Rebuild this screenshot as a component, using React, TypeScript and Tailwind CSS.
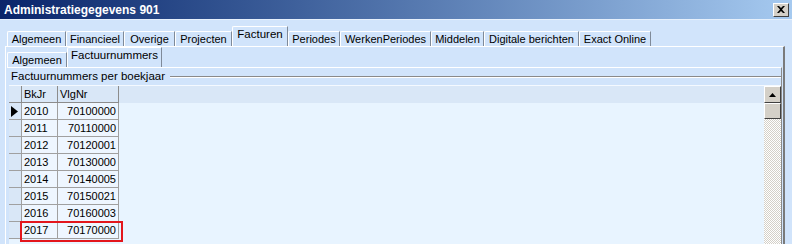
import React from 'react';

const MAIN_TABS = [
  { label: 'Algemeen', w: 'w-[59px]' },
  { label: 'Financieel', w: 'w-[58px]' },
  { label: 'Overige', w: 'w-[51px]' },
  { label: 'Projecten', w: 'w-[57px]' },
  { label: 'Facturen', w: 'w-[56px]', active: true },
  { label: 'Periodes', w: 'w-[52px]' },
  { label: 'WerkenPeriodes', w: 'w-[91px]' },
  { label: 'Middelen', w: 'w-[53px]' },
  { label: 'Digitale berichten', w: 'w-[95px]' },
  { label: 'Exact Online', w: 'w-[72px]' },
];

const ROWS = [
  ['2010', '70100000'],
  ['2011', '70110000'],
  ['2012', '70120001'],
  ['2013', '70130000'],
  ['2014', '70140005'],
  ['2015', '70150021'],
  ['2016', '70160003'],
  ['2017', '70170000'],
];

function Tab({ label, w, active }: { label: string; w: string; active?: boolean }) {
  return (
    <div
      className={`${w} flex items-center justify-center border-t border-l border-white border-r border-r-[#7f8a99] rounded-tl-[2px] ${
        active ? 'h-[20px] pb-[3px] text-[11.5px]' : 'h-[15px] pt-[1px]'
      }`}
    >
      {label}
    </div>
  );
}

export default function App() {
  return (
    <div className="w-[792px] h-[244px] overflow-hidden bg-[#d1e4fb] font-['Liberation_Sans',Arial,sans-serif] text-[11px] leading-none text-[#000]">
      {/* Title bar */}
      <div className="h-[20px] flex items-center justify-between pl-[4px] pr-[3px] bg-gradient-to-r from-[#0a246a] to-[#a6caf0] border-b border-[#e6f0fc]">
        <span className="text-white font-bold text-[12px]">Administratiegegevens 901</span>
        <div className="w-[16px] h-[14px] bg-[#d4d0c8] border border-t-white border-l-white border-r-[#404040] border-b-[#404040] flex items-center justify-center">
          <svg width="8" height="7" viewBox="0 0 8 7">
            <path d="M0 0h2l2 2 2-2h2L5 3.5 8 7H6L4 5 2 7H0l3-3.5z" fill="#000" />
          </svg>
        </div>
      </div>

      {/* Main tabs */}
      <div className="h-[26px] flex items-end pl-[7px]">
        {MAIN_TABS.map(t => (
          <Tab key={t.label} {...t} />
        ))}
      </div>

      {/* Outer panel */}
      <div className="ml-[5px] w-[780px] h-[200px] border-t border-l border-white border-r-2 border-r-[#7a7a7a] pl-[1px]">
        {/* Sub tabs */}
        <div className="h-[20px] flex items-end">
          <Tab label="Algemeen" w="w-[60px]" />
          <Tab label="Factuurnummers" w="w-[95px]" active />
        </div>

        <div className="border-t border-white border-r border-r-[#8a8a8a] h-[180px] mr-[1px]">
          {/* Group header */}
          <div className="h-[17px] flex items-center pl-[4px] text-[11.5px]">
            <span className="pr-[5px]">Factuurnummers per boekjaar</span>
            <div className="flex-1 h-[2px] border-t border-[#8a8a8a] border-b border-b-white" />
          </div>

          {/* Grid */}
          <div className="ml-[2px] h-[170px] flex bg-[#e8f4ff] border-t border-[#f4f9ff] relative">
            <div className="flex-1">
              <div className="flex h-[17px] bg-[#d9e7f7]">
                <div className="w-[13px] border-r border-b border-[#8c8c8c]" />
                <div className="w-[36px] pl-[2px] flex items-center border-r border-b border-[#8c8c8c]">BkJr</div>
                <div className="w-[61px] pl-[2px] flex items-center border-r border-b border-[#8c8c8c]">VlgNr</div>
              </div>
              {ROWS.map(([jr, nr], i) => (
                <div key={jr} className="flex h-[17px]">
                  <div className="w-[13px] bg-[#d9e7f7] border-r border-b border-[#a0a0a0] flex items-center pl-[2px]">
                    {i === 0 && (
                      <svg width="7" height="11" viewBox="0 0 7 11">
                        <path d="M0 0L7 5.5 0 11z" fill="#000" />
                      </svg>
                    )}
                  </div>
                  <div className="w-[36px] pl-[2px] bg-[#eef6ff] flex items-center border-r border-b border-[#a0a0a0]">{jr}</div>
                  <div className="w-[61px] pr-[2px] bg-[#eef6ff] flex items-center justify-end border-r border-b border-[#a0a0a0]">{nr}</div>
                </div>
              ))}
            </div>

            {/* Scrollbar */}
            <div className="w-[17px] flex flex-col">
              <div className="h-[17px] bg-[#d4d0c8] border border-t-white border-l-white border-r-[#404040] border-b-[#404040] flex items-center justify-center">
                <svg width="7" height="4" viewBox="0 0 7 4">
                  <path d="M3.5 0L7 4H0z" fill="#000" />
                </svg>
              </div>
              <div className="h-[16px] bg-[#d4d0c8] border border-t-white border-l-white border-r-[#404040] border-b-[#404040]" />
              <div className="flex-1 bg-[repeating-conic-gradient(#d4d0c8_0_25%,#ffffff_0_50%)] bg-[length:2px_2px]" />
            </div>

            {/* Highlight around 2017 row */}
            <div className="absolute left-[11px] top-[135px] w-[103px] h-[21px] border-2 border-[#e3161c]" />
          </div>
        </div>
      </div>
    </div>
  );
}
